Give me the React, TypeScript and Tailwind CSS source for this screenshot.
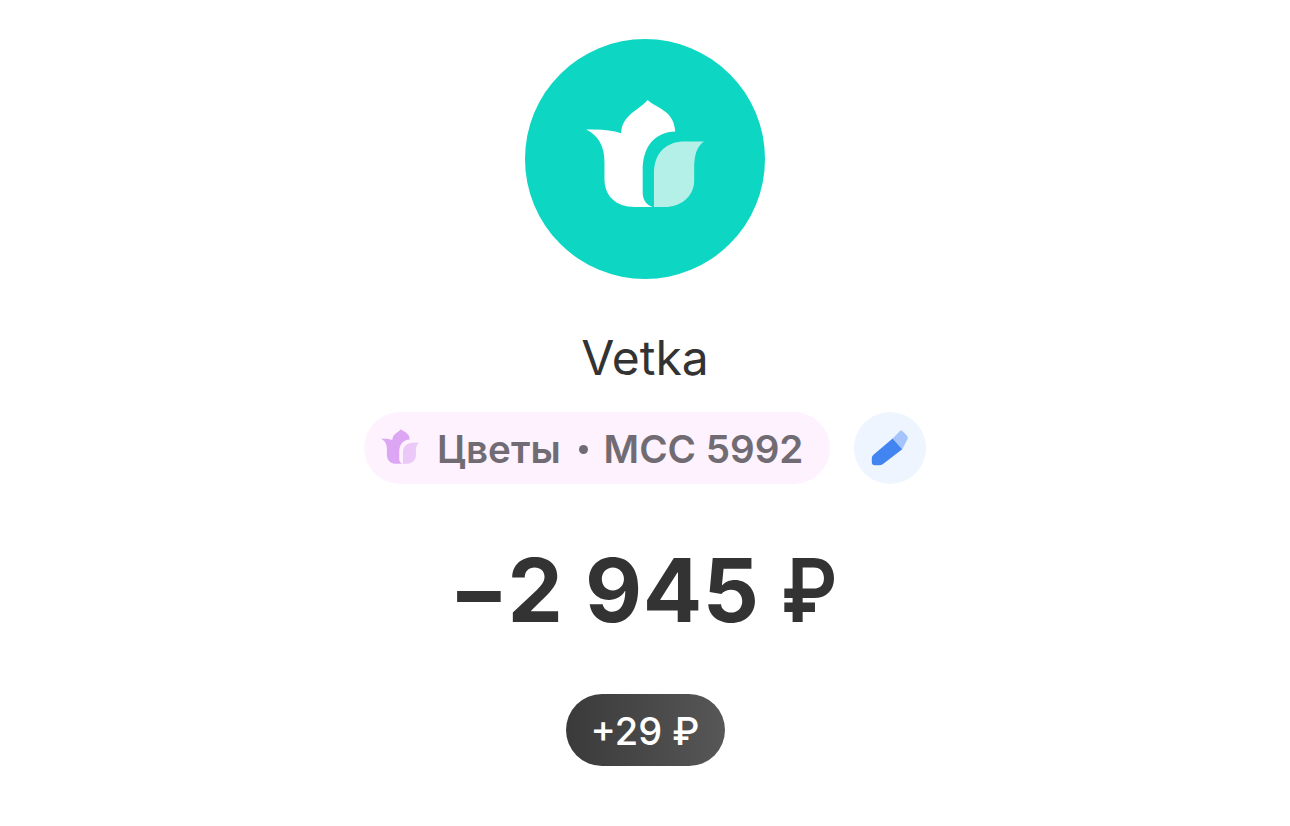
function Tulip({ main, soft, className }: { main: string; soft: string; className: string }) {
  return (
    <svg viewBox="78 58 354 322" className={className}>
      <path
        fill={main}
        d="M263 58C290 84 342 88 346 153C285 155 248 197 248 270L248 335C248 358 258 374 278 380L225 380C165 380 133 345 133 295L133 245C133 198 115 165 78 147C120 145 155 148 183 158C186 102 238 88 263 58Z"
      />
      <path
        fill={soft}
        d="M282 380L282 280C282 215 320 183 375 183L432 183C410 200 403 225 403 265L403 300C403 350 360 380 315 380Z"
      />
    </svg>
  );
}

function Pencil() {
  return (
    <svg viewBox="690 88 120 115" className="w-[40px] h-[38px]">
      <path fill="#a5c4fb" d="M758 117L778 96Q783 90 788 95L801 108Q806 113 803 119L787 149Z" />
      <path fill="#4285f0" d="M700 166L758 117L787 149L730 193Q724 198 716 198L704 198Q695 198 695 189L695 176Q695 170 700 166Z" />
    </svg>
  );
}

export default function App() {
  return (
    <div
      className="min-h-[826px] bg-white flex flex-col items-center pt-[39px] text-[#333333]"
      style={{ fontFamily: 'Inter, "Noto Sans", sans-serif' }}
    >
      <div className="w-[240px] h-[240px] rounded-full bg-[#0dd6c2] flex items-center justify-center">
        <Tulip main="#ffffff" soft="#b5f0e8" className="w-[118px] h-[107px] mb-[12px]" />
      </div>

      <h1 className="mt-[50px] text-[48px] leading-[58px] font-normal">Vetka</h1>

      <div className="mt-[25px] flex items-center gap-[24px]">
        <div className="h-[72px] w-[466px] rounded-full bg-[#fdf2fd] flex items-center pl-[17px] text-[38.6px] font-semibold text-[#716c73] whitespace-nowrap">
          <Tulip main="#dca6f4" soft="#eac8f8" className="w-[38px] h-[35px] mb-[3px]" />
          <span className="ml-[18px] mt-[3px]">Цветы</span>
          <span className="ml-[18px] mt-[3px] w-[9px] h-[9px] rounded-full bg-[#716c73]" />
          <span className="ml-[16px] mt-[3px]">MCC 5992</span>
        </div>
        <button className="w-[72px] h-[72px] rounded-full bg-[#eff5fe] flex items-center justify-center">
          <Pencil />
        </button>
      </div>

      <div className="mt-[50px] h-[112px] w-[392px] text-[88px] leading-[112px] font-bold flex whitespace-nowrap">
        <span className="tracking-[0.6px]">−2 945</span>
        <span className="ml-[21px] font-semibold inline-block origin-left scale-x-[0.88]">₽</span>
      </div>

      <div className="mt-[48px] pt-[2px] h-[72px] w-[159px] rounded-full bg-gradient-to-r from-[#3a3a3a] to-[#575757] flex items-center justify-center text-white text-[38px] font-medium">
        +29 ₽
      </div>
    </div>
  );
}
